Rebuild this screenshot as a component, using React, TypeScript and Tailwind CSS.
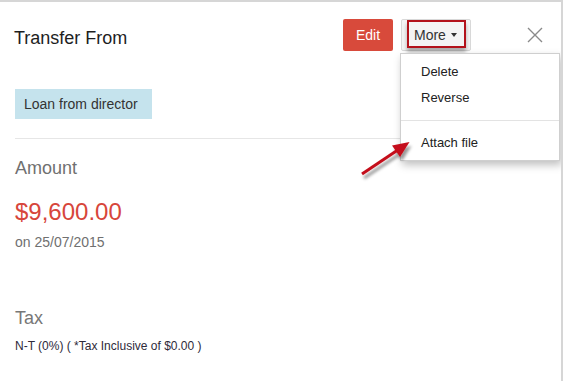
import React from "react";

const menuItems = ["Delete", "Reverse"];

function CloseIcon() {
  return (
    <svg width="16" height="16" viewBox="0 0 16 16" className="block">
      <path d="M1 1 L15 15 M15 1 L1 15" stroke="#8a8a8a" strokeWidth="1.4" fill="none" />
    </svg>
  );
}

function PointerArrow() {
  return (
    <svg
      width="70"
      height="60"
      viewBox="0 0 70 60"
      className="absolute left-[355px] top-[130px] pointer-events-none"
    >
      <defs>
        <filter id="arrowShadow" x="-30%" y="-30%" width="160%" height="160%">
          <feDropShadow dx="2" dy="4" stdDeviation="1.6" floodColor="#000" floodOpacity="0.4" />
        </filter>
      </defs>
      <g filter="url(#arrowShadow)">
        <line x1="7" y1="42" x2="42" y2="18.5" stroke="#c4101a" strokeWidth="3" />
        <polygon points="54.5,10 45,25 37,13.5" fill="#c4101a" />
      </g>
    </svg>
  );
}

export default function App() {
  return (
    <div className="relative w-[563px] h-[381px] overflow-hidden bg-white border-t-2 border-r-2 border-[#d6d6d6] font-['Liberation_Sans',Arial,sans-serif]">
      {/* header */}
      <div className="flex items-center pl-[14px] pt-[17px] h-[49px]">
        <h1 className="flex-1 text-[18px] leading-[32px] text-[#1e1e1e] pt-[6px]">Transfer From</h1>
        <button className="w-[50px] h-[32px] rounded-[2px] bg-[#d84a3b] text-white text-[14px]">
          Edit
        </button>
        <button className="relative ml-2 w-[70px] h-[32px] rounded-[2px] border border-[#d9d9d9] bg-[#f4f4f4] text-[14px] text-[#333]">
          <span className="absolute left-[5px] top-0 w-[59px] h-[28px] border-2 border-[#b3121b] shadow-[0_4px_4px_rgba(0,0,0,0.3)]" />
          <span className="relative flex items-center pl-[12px] gap-[5px]">
            More
            <span className="w-0 h-0 border-l-[3.5px] border-r-[3.5px] border-t-[4px] border-l-transparent border-r-transparent border-t-[#333]" />
          </span>
        </button>
        <div className="ml-[56px] w-[16px]">
          <CloseIcon />
        </div>
        <div className="w-[18px]" />
      </div>

      {/* body */}
      <div className="pl-[15px] pr-[15px]">
        <div className="mt-[38px] w-[137px] h-[30px] bg-[#c5e3ed] flex items-center pl-[9px] text-[14px] text-[#333] whitespace-nowrap">
          Loan from director
        </div>
        <div className="mt-[19px] h-px bg-[#e6e6e6]" />

        <div className="mt-[19px] text-[18px] leading-[21px] text-[#707070]">Amount</div>
        <div className="mt-[19px] text-[24px] leading-[28px] text-[#d7463b]">$9,600.00</div>
        <div className="mt-[8px] text-[14px] leading-[16px] text-[#707070]">on 25/07/2015</div>

        <div className="mt-[58px] text-[18px] leading-[21px] text-[#777]">Tax</div>
        <div className="mt-[10px] text-[12px] leading-[14px] text-[#2e2a3a]">
          N-T (0%) ( *Tax Inclusive of $0.00 )
        </div>
      </div>

      {/* dropdown menu */}
      <div className="absolute left-[400px] top-[51px] w-[160px] bg-white border border-[#cfcfcf] shadow-[2px_4px_8px_rgba(0,0,0,0.25)] pt-[5px] pb-[4px]">
        {menuItems.map((item) => (
          <div key={item} className="pl-[20px] text-[13px] leading-[26px] text-[#222]">
            {item}
          </div>
        ))}
        <div className="mt-[9px] h-px bg-[#e3e3e3]" />
        <div className="mt-[9px] pl-[20px] text-[13px] leading-[26px] text-[#222]">Attach file</div>
      </div>

      <PointerArrow />
    </div>
  );
}
